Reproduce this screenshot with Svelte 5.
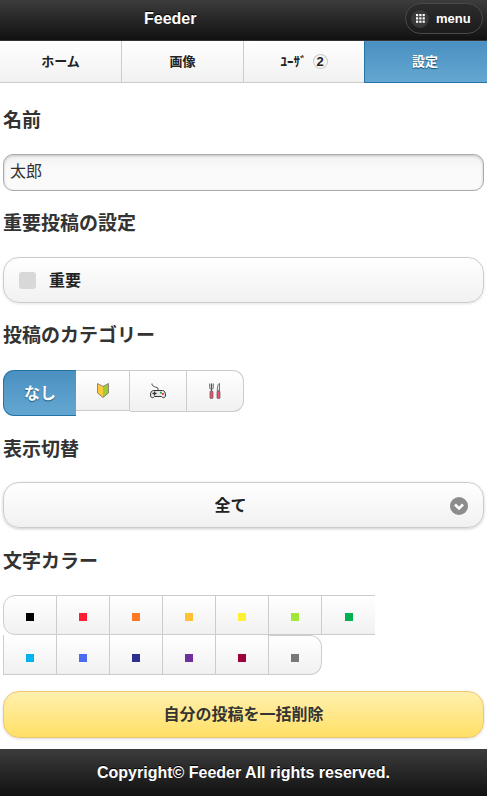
<script>
  const nav = [
    { label: 'ホーム' },
    { label: '画像' },
    { label: 'ﾕｰｻﾞ', badge: '2' },
    { label: '設定', active: true }
  ];
  const row1 = ['#000000', '#ff1f35', '#ff7a22', '#ffc033', '#fff033', '#a2e63a', '#00b150'];
  const row2 = ['#00b4f0', '#4a6cf0', '#2e3192', '#70309c', '#a0003a', '#787878'];
</script>

<div class="page">
  <header class="top">
    <h1>Feeder</h1>
    <div class="menu">
      <span class="menu-icon">
        <svg width="9" height="9" viewBox="0 0 9 9" fill="#fff">
          {#each [0, 3.3, 6.6] as y}
            {#each [0, 3.3, 6.6] as x}
              <rect {x} {y} width="2.2" height="2.2" />
            {/each}
          {/each}
        </svg>
      </span>
      <span>menu</span>
    </div>
  </header>

  <nav class="tabs">
    {#each nav as item}
      <div class="tab" class:active={item.active}>
        <span>{item.label}</span>
        {#if item.badge}<span class="badge">{item.badge}</span>{/if}
      </div>
    {/each}
  </nav>

  <main class="content">
    <h2 class="h-name">名前</h2>
    <input class="text" value="太郎" />

    <h2>重要投稿の設定</h2>
    <div class="check">
      <span class="box"></span>
      <span class="check-label">重要</span>
    </div>

    <h2 class="h-cat">投稿のカテゴリー</h2>
    <div class="cats">
      <div class="cat none">なし</div>
      <div class="cat c1">
        <svg width="12" height="15" viewBox="0 0 12 15">
          <path d="M0.5 0.5 L6 3.500 L11.500 0.500 V10 L6 14.500 L0.500 10 Z" fill="#ffc93a" />
          <path d="M6 3.500 L11.500 0.500 V10 L6 14.500 Z" fill="#9ccc3c" />
          <path d="M0.5 0.5 L6 3.500 L11.500 0.500 V10 L6 14.500 L0.500 10 Z" fill="none" stroke="#8a8a70" stroke-width="1" />
        </svg>
      </div>
      <div class="cat c2">
        <svg width="16" height="16" viewBox="0 0 16 16">
          <path d="M2 0.500 V2 L4 3.500 L8 5 V7" fill="none" stroke="#333" stroke-width="0.800" />
          <path d="M3.500 7.500 H12.500 C14.500 7.500 15.500 9.500 15.500 12 C15.500 15 13 15.500 11.500 13.500 H4.500 C3 15.500 0.500 15 0.500 12 C0.500 9.500 1.500 7.500 3.500 7.500 Z" fill="#e6e6e6" stroke="#333" stroke-width="1" />
          <rect x="2.500" y="9.800" width="4" height="1.300" fill="#333" />
          <rect x="3.900" y="8.500" width="1.300" height="4" fill="#333" />
          <rect x="10" y="8.800" width="1.800" height="1.800" fill="#22aa44" />
          <rect x="12" y="10" width="1.800" height="1.800" fill="#e03040" />
        </svg>
      </div>
      <div class="cat c3">
        <svg width="12" height="16" viewBox="0 0 12 16">
          <path d="M0.800 0.500 V4.500 C0.800 6 2 6.500 2.500 6.500 C3 6.500 4.200 6 4.200 4.500 V0.500 M2.500 0.500 V8" fill="none" stroke="#555" stroke-width="1" />
          <rect x="1" y="8" width="3" height="7.500" rx="1" fill="#f0506e" stroke="#555" stroke-width="0.700" />
          <path d="M10 0.500 C8.500 1.500 8.300 5 8.300 8 H10.500 V0.500 Z" fill="#e8e8e8" stroke="#555" stroke-width="0.800" />
          <rect x="8" y="8" width="3" height="7.500" rx="1" fill="#f0506e" stroke="#555" stroke-width="0.700" />
        </svg>
      </div>
    </div>

    <h2 class="h-view">表示切替</h2>
    <div class="select">
      <span class="select-label">全て</span>
      <span class="arrow">
        <svg width="18" height="18" viewBox="0 0 18 18">
          <circle cx="9" cy="9" r="9" fill="#8c8c8c" />
          <path d="M5 7.500 L9 11.500 L13 7.500" fill="none" stroke="#fff" stroke-width="2.600" />
        </svg>
      </span>
    </div>

    <h2 class="h-color">文字カラー</h2>
    <div class="colors">
      <div class="color-row r1">
        {#each row1 as c}
          <div class="swatch"><i style:background={c}></i></div>
        {/each}
      </div>
      <div class="color-row r2">
        {#each row2 as c}
          <div class="swatch"><i style:background={c}></i></div>
        {/each}
      </div>
    </div>

    <button class="danger">自分の投稿を一括削除</button>
  </main>

  <footer class="bottom">Copyright© Feeder All rights reserved.</footer>
</div>

<style>
  :global(body) {
    margin: 0;
    background: #fff;
  }
  .page {
    width: 487px;
    height: 796px;
    display: flex;
    flex-direction: column;
    font-family: "Liberation Sans", "Noto Sans CJK JP", sans-serif;
    color: #333;
    overflow: hidden;
  }
  .top {
    height: 40px;
    border-bottom: 1px solid #333;
    background: linear-gradient(#3c3c3c, #111);
    position: relative;
    display: flex;
    align-items: center;
    padding-left: 144px;
    flex: none;
  }
  h1 {
    margin: 0 0 3px;
    font-size: 16px;
    font-weight: 700;
    color: #fff;
    text-shadow: 0 -1px 0 #000;
  }
  .menu {
    position: absolute;
    left: 405px;
    top: 3px;
    width: 78px;
    height: 31px;
    box-sizing: border-box;
    border: 1px solid #4a4a4a;
    border-radius: 16px;
    background: linear-gradient(#2c2c2c, #1c1c1c);
    display: flex;
    align-items: center;
    gap: 7px;
    padding-left: 5px;
    color: #fff;
    font-size: 13px;
    font-weight: 700;
  }
  .menu-icon {
    width: 18px;
    height: 18px;
    border-radius: 50%;
    background: #3a3a3a;
    display: flex;
    align-items: center;
    justify-content: center;
  }
  .tabs {
    display: flex;
    height: 42px;
    flex: none;
    box-sizing: border-box;
  }
  .tab {
    flex: none;
    width: 122px;
    box-sizing: border-box;
    border-right: 1px solid #ccc;
    border-bottom: 1px solid #ccc;
    background: linear-gradient(#fff, #f1f1f1);
    display: flex;
    align-items: center;
    justify-content: center;
    gap: 6px;
    padding-bottom: 3px;
    font-size: 13px;
    font-weight: 700;
    color: #222;
  }
  .tab:nth-child(3) {
    width: 120px;
    border-right: none;
  }
  .tab.active {
    width: 123px;
    border: 1px solid #2373a5;
    border-top-color: #5393c5;
    border-right: none;
    padding-right: 2px;
    background: linear-gradient(#4a90c0, #64a7d2);
    color: #fff;
    text-shadow: 0 1px 1px #145072;
  }
  .badge {
    width: 15px;
    height: 15px;
    border-radius: 50%;
    background: #f6f6f6;
    box-shadow: inset 0 0 0 1px #ccc;
    display: flex;
    align-items: center;
    justify-content: center;
    font-size: 13px;
    margin-top: 3px;
  }
  .content {
    flex: 1;
    padding: 0 3px;
    display: flex;
    flex-direction: column;
    align-items: flex-start;
  }
  h2 {
    margin: 20px 0 22px;
    height: 24px;
    line-height: 26px;
    font-size: 19px;
    font-weight: 700;
    color: #333;
  }
  .h-name {
    margin: 24px 0 23px;
    line-height: 28px;
  }
  .h-cat {
    margin-bottom: 23px;
  }
  .h-view {
    margin: 21px 0 21px;
  }
  .h-color {
    margin: 21px 0 22px;
  }
  .text {
    width: 481px;
    height: 37px;
    box-sizing: border-box;
    border: 1px solid #aaa;
    border-radius: 10px;
    background: linear-gradient(#f2f2f2 0, #fafafa 40%, #fafafa);
    box-shadow: inset 0 1px 3px rgba(0, 0, 0, 0.2);
    padding: 0 6px 5px;
    font: 400 16px "Liberation Sans", "Noto Sans CJK JP", sans-serif;
    color: #333;
    margin: 0;
  }
  .check {
    width: 481px;
    height: 46px;
    box-sizing: border-box;
    border: 1px solid #ccc;
    border-radius: 16px;
    background: linear-gradient(#fff, #f1f1f1);
    display: flex;
    align-items: center;
    padding-left: 15px;
    gap: 13px;
    font-size: 16px;
    font-weight: 700;
    color: #222;
    box-shadow: 0 1px 3px rgba(0, 0, 0, 0.1);
  }
  .check-label,
  .select-label {
    margin-bottom: 2px;
  }
  .box {
    width: 17px;
    height: 17px;
    border-radius: 3px;
    background: #d8d8d8;
  }
  .cats {
    display: flex;
    align-items: flex-start;
    height: 46px;
  }
  .cat {
    box-sizing: border-box;
    border: 1px solid #ccc;
    border-left: none;
    background: linear-gradient(#fff, #f1f1f1);
    display: flex;
    align-items: center;
    justify-content: center;
  }
  .none {
    width: 73px;
    height: 46px;
    border: 1px solid #2373a5;
    border-right: none;
    border-radius: 11px 0 0 11px;
    background: linear-gradient(#4a90c0, #64a7d2);
    color: #fff;
    font-size: 16px;
    font-weight: 700;
    padding-bottom: 2px;
    text-shadow: 0 1px 1px #145072;
  }
  .c1 { width: 54px; height: 41px; }
  .c2 { width: 57px; height: 42px; }
  .c3 { width: 57px; height: 42px; border-radius: 0 11px 11px 0; }
  .select {
    width: 481px;
    height: 46px;
    box-sizing: border-box;
    border: 1px solid #ccc;
    border-radius: 16px;
    background: linear-gradient(#fff, #f1f1f1);
    box-shadow: 0 1px 3px rgba(0, 0, 0, 0.2);
    display: flex;
    align-items: center;
    justify-content: center;
    font-size: 16px;
    font-weight: 700;
    color: #222;
    position: relative;
    padding-right: 26px;
  }
  .arrow {
    position: absolute;
    right: 15px;
    top: 14px;
    height: 18px;
  }
  .colors {
    display: flex;
    flex-direction: column;
  }
  .color-row {
    display: flex;
    height: 40px;
  }
  .swatch {
    width: 53px;
    box-sizing: border-box;
    border: 1px solid #ccc;
    border-left: none;
    background: linear-gradient(#fff, #f1f1f1);
    display: flex;
    align-items: center;
    justify-content: center;
  }
  .swatch:first-child {
    border-left: 1px solid #ccc;
    width: 54px;
  }
  .r1 .swatch:first-child { border-bottom-left-radius: 12px; border-top-left-radius: 12px; }
  .r1 .swatch:last-child { border-right: none; }
  .r2 .swatch { border-top: none; height: 40px; }
  .r2 .swatch:last-child { border-top: 1px solid #ccc; border-top-right-radius: 12px; border-bottom-right-radius: 12px; }
  .swatch i {
    width: 8px;
    height: 8px;
    display: block;
    margin-top: 4px;
  }
  .r2 .swatch i {
    margin-top: 6px;
  }
  .danger {
    width: 481px;
    height: 47px;
    margin: 16px 0 0;
    padding: 0 0 4px;
    box-sizing: border-box;
    border: 1px solid #f0c56c;
    border-radius: 16px;
    background: linear-gradient(#fff0ae, #ffe065);
    box-shadow: 0 1px 3px rgba(0, 0, 0, 0.15);
    font: 700 16px "Liberation Sans", "Noto Sans CJK JP", sans-serif;
    color: #333;
  }
  .bottom {
    height: 47px;
    flex: none;
    background: linear-gradient(#3c3c3c, #111);
    color: #fff;
    font-size: 16px;
    font-weight: 700;
    display: flex;
    align-items: center;
    justify-content: center;
    text-shadow: 0 -1px 0 #000;
  }
</style>
